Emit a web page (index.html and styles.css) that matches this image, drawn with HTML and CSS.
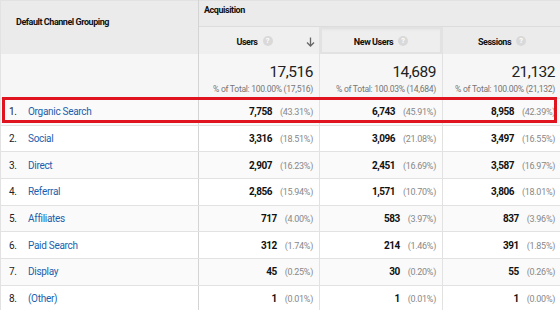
FILE: index.html
```html
<!DOCTYPE html>
<html>
<head>
<meta charset="utf-8">
<link rel="stylesheet" href="styles.css">
</head>
<body>
<div class="wrap">
<table class="report">
  <colgroup>
    <col class="c-dim"><col class="c-users"><col class="c-new"><col class="c-sess">
  </colgroup>
  <thead>
    <tr class="h-group">
      <th class="dim-head" rowspan="2"><span>Default Channel Grouping</span></th>
      <th class="group" colspan="3">Acquisition</th>
    </tr>
    <tr class="h-metric">
      <th class="metric sorted"><span class="lbl">Users</span><span class="q">?</span><svg class="arrow" width="9" height="10" viewBox="0 0 9 10"><path d="M4.5 0.5 V9 M1 5.5 L4.5 9 L8 5.5" fill="none" stroke="#666" stroke-width="1.3"/></svg></th>
      <th class="metric raised"><span class="lbl">New Users</span><span class="q">?</span></th>
      <th class="metric"><span class="lbl">Sessions</span><span class="q">?</span></th>
    </tr>
  </thead>
  <tbody>
    <tr class="totals">
      <td></td>
      <td><div class="big">17,516</div><div class="pct-total">% of Total: 100.00% (17,516)</div></td>
      <td><div class="big">14,689</div><div class="pct-total">% of Total: 100.03% (14,684)</div></td>
      <td><div class="big">21,132</div><div class="pct-total">% of Total: 100.00% (21,132)</div></td>
    </tr>
    <tr class="row alt"><td><span class="idx">1.</span><a class="name">Organic Search</a></td><td class="num sort"><b>7,758</b><i>(43.31%)</i></td><td class="num"><b>6,743</b><i>(45.91%)</i></td><td class="num"><b>8,958</b><i>(42.39%)</i></td></tr>
    <tr class="row"><td><span class="idx">2.</span><a class="name">Social</a></td><td class="num sort"><b>3,316</b><i>(18.51%)</i></td><td class="num"><b>3,096</b><i>(21.08%)</i></td><td class="num"><b>3,497</b><i>(16.55%)</i></td></tr>
    <tr class="row alt"><td><span class="idx">3.</span><a class="name">Direct</a></td><td class="num sort"><b>2,907</b><i>(16.23%)</i></td><td class="num"><b>2,451</b><i>(16.69%)</i></td><td class="num"><b>3,587</b><i>(16.97%)</i></td></tr>
    <tr class="row"><td><span class="idx">4.</span><a class="name">Referral</a></td><td class="num sort"><b>2,856</b><i>(15.94%)</i></td><td class="num"><b>1,571</b><i>(10.70%)</i></td><td class="num"><b>3,806</b><i>(18.01%)</i></td></tr>
    <tr class="row alt"><td><span class="idx">5.</span><a class="name">Affiliates</a></td><td class="num sort"><b>717</b><i>(4.00%)</i></td><td class="num"><b>583</b><i>(3.97%)</i></td><td class="num"><b>837</b><i>(3.96%)</i></td></tr>
    <tr class="row"><td><span class="idx">6.</span><a class="name">Paid Search</a></td><td class="num sort"><b>312</b><i>(1.74%)</i></td><td class="num"><b>214</b><i>(1.46%)</i></td><td class="num"><b>391</b><i>(1.85%)</i></td></tr>
    <tr class="row alt"><td><span class="idx">7.</span><a class="name">Display</a></td><td class="num sort"><b>45</b><i>(0.25%)</i></td><td class="num"><b>30</b><i>(0.20%)</i></td><td class="num"><b>55</b><i>(0.26%)</i></td></tr>
    <tr class="row"><td><span class="idx">8.</span><a class="name">(Other)</a></td><td class="num sort"><b>1</b><i>(0.01%)</i></td><td class="num"><b>1</b><i>(0.01%)</i></td><td class="num"><b>1</b><i>(0.00%)</i></td></tr>
  </tbody>
</table>
<div class="highlight"></div>
</div>
</body>
</html>
```
FILE: styles.css
```css
html, body {
  margin: 0;
  padding: 0;
  background: #ffffff;
}
body {
  font-family: Roboto, "Liberation Sans", Arial, sans-serif;
  color: #222;
}
.wrap {
  position: relative;
  width: 560px;
  height: 310px;
  overflow: hidden;
}
.report {
  border-collapse: collapse;
  table-layout: fixed;
  width: 561px;
}
.c-dim { width: 198px; }
.c-users { width: 121px; }
.c-new { width: 123px; }
.c-sess { width: 119px; }

th, td {
  padding: 0;
  border: 1px solid #e2e2e2;
}
thead th {
  background: #ebebeb;
  font-weight: bold;
  color: #111;
  font-size: 9px;
  letter-spacing: -0.45px;
}
.h-group th.group {
  height: 26px;
  text-align: left;
  vertical-align: top;
  padding: 4px 0 0 5px;
  box-sizing: border-box;
  border-bottom: 1px solid #dcdcdc;
}
.dim-head {
  text-align: left;
  vertical-align: top;
  padding: 16px 0 0 15px;
  border-bottom: none !important;
  border-right: 1px solid #d4d4d4 !important;
}
.h-metric th {
  height: 26px;
  position: relative;
  border-bottom: none;
  padding-top: 1px;
}
.h-metric th.sorted {
  background: #efefef;
  padding-right: 9px;
}
.h-metric th.raised {
  background: #eeeeee;
  box-shadow: inset 0 0 0 2px #e2e2e2, inset 0 2px 3px #dcdcdc;
}
.lbl {
  vertical-align: middle;
}
.q {
  display: inline-block;
  width: 10px;
  height: 10px;
  border-radius: 50%;
  background: #d9d9d9;
  color: #fff;
  font-size: 7.5px;
  line-height: 10px;
  text-align: center;
  margin-left: 5px;
  vertical-align: middle;
  letter-spacing: 0;
}
.arrow {
  position: absolute;
  right: 4px;
  top: 10px;
}
.totals td {
  background: #f6f6f6;
  height: 44px;
  text-align: right;
  padding-right: 6px;
  border-top: none;
  vertical-align: top;
}
.totals td:first-child {
  border-right: 1px solid #d4d4d4;
}
.big {
  font-size: 15.5px;
  letter-spacing: -0.5px;
  color: #222;
  margin-top: 9px;
  line-height: 18px;
}
.pct-total {
  font-size: 8.6px;
  letter-spacing: -0.3px;
  color: #777;
  margin-top: 3px;
  white-space: nowrap;
}
.row td {
  height: 25.7px;
  font-size: 10px;
  background: #fff;
}
.row.alt td {
  background: #fafafa;
}
.row td:first-child {
  padding-left: 8px;
  letter-spacing: -0.3px;
  border-right: 1px solid #d4d4d4;
}
.idx {
  display: inline-block;
  width: 19px;
  color: #222;
}
.name {
  color: #1b5fae;
}
.num {
  text-align: right;
  padding-right: 6px;
}
.num b {
  font-weight: bold;
  color: #111;
  letter-spacing: -0.5px;
}
.num i {
  font-style: normal;
  font-size: 9px;
  letter-spacing: -0.3px;
  color: #888;
  margin-left: 8px;
}
.highlight {
  position: absolute;
  left: 2px;
  top: 97px;
  width: 555px;
  height: 26px;
  border: 3px solid #e0141e;
  box-sizing: border-box;
}
```
